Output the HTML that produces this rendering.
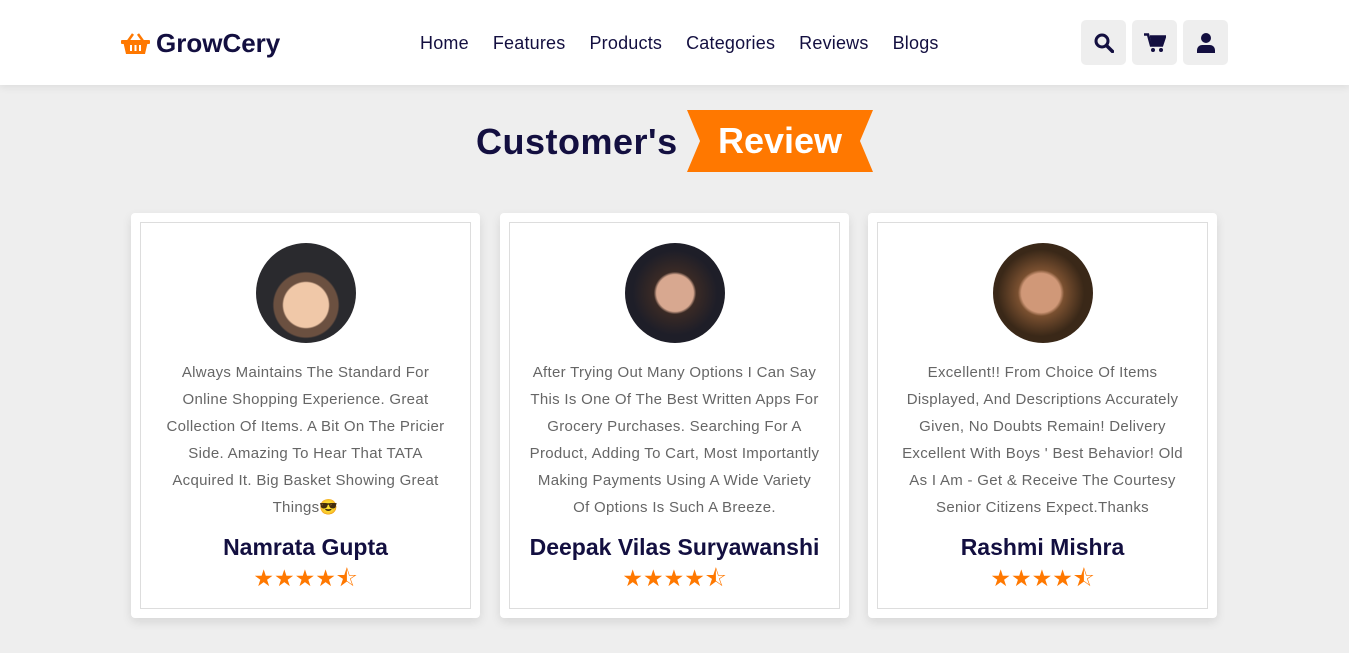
<!DOCTYPE html>
<html><head><meta charset="utf-8"><style>
*{margin:0;padding:0;box-sizing:border-box}
body{width:1349px;height:653px;background:#eeeeee;font-family:"Liberation Sans",sans-serif;overflow:hidden;position:relative}
header{position:absolute;left:0;top:0;width:1349px;height:85px;background:#fff;box-shadow:0 2px 8px rgba(0,0,0,.08)}
.logo{position:absolute;left:121px;top:28px;font-size:26px;font-weight:bold;color:#130f40;display:flex;align-items:center;gap:6px}
nav{position:absolute;left:420px;top:33px;font-size:18px;color:#130f40;letter-spacing:.2px}
nav span{margin-right:24px}
.btns{position:absolute;left:1081px;top:20px;display:flex;gap:6px}
.btns div{width:45px;height:45px;background:#eee;border-radius:5px;display:flex;align-items:center;justify-content:center}
.title{position:absolute;left:476px;top:121px;font-size:36px;font-weight:bold;color:#130f40;letter-spacing:.5px}
.rib{position:absolute;left:687px;top:110px;width:186px;height:62px;background:#ff7800;clip-path:polygon(0 0,100% 0,93% 50%,100% 100%,0 100%,7% 50%);color:#fff;font-size:36px;font-weight:bold;text-align:center;line-height:62px}
.card{position:absolute;top:213px;width:349px;height:405px;background:#fff;box-shadow:0 4px 10px rgba(0,0,0,.1);border-radius:4px}
.in{position:absolute;inset:9px;border:1px solid #ddd;text-align:center}
.av{width:100px;height:100px;border-radius:50%;margin:20px auto 0}
.in p{margin-top:16px;font-size:15px;line-height:27px;color:#666;padding:0 18px;letter-spacing:.3px}
.in h3{position:absolute;top:311px;left:0;right:0;font-size:23px;color:#130f40}
.st{position:absolute;top:339px;left:0;right:0;color:#ff7800;font-size:23px;letter-spacing:0}
</style></head><body>
<header>
<div class="logo"><svg width="29" height="24" viewBox="0 0 29 24"><path d="M2 9h25l-3 13H5z" fill="#ff7800"/><path d="M7 9l5-7M22 9l-5-7" stroke="#ff7800" stroke-width="2.5" fill="none"/><rect x="0" y="8" width="29" height="4" rx="1" fill="#ff7800"/><path d="M10 13v6M14.5 13v6M19 13v6" stroke="#fff" stroke-width="2"/></svg>GrowCery</div>
<nav><span>Home</span><span>Features</span><span>Products</span><span>Categories</span><span>Reviews</span><span>Blogs</span></nav>
<div class="btns">
<div><svg width="20" height="20" viewBox="0 0 20 20"><circle cx="8" cy="8" r="6" stroke="#130f40" stroke-width="3" fill="none"/><path d="M12.5 12.5l6 6" stroke="#130f40" stroke-width="3.5" stroke-linecap="round"/></svg></div>
<div><svg width="22" height="20" viewBox="0 0 22 20"><path d="M0 1.5h4l3 11h11l3-9H6" stroke="#130f40" stroke-width="2.5" fill="none"/><path d="M6 4h15l-3 9H8z" fill="#130f40"/><circle cx="9" cy="17" r="2" fill="#130f40"/><circle cx="17" cy="17" r="2" fill="#130f40"/></svg></div>
<div><svg width="18" height="20" viewBox="0 0 18 20"><circle cx="9" cy="5" r="5" fill="#130f40"/><path d="M0 20v-3a5 5 0 0 1 5-5h8a5 5 0 0 1 5 5v3z" fill="#130f40"/></svg></div>
</div>
</header>
<div class="title">Customer's</div>
<div class="rib">Review</div>

<div class="card" style="left:131px"><div class="in">
<div class="av" style="background:radial-gradient(circle at 50% 62%,#f0c8a8 0 28%,#6b5040 30% 40%,#2a2a2e 42%)"></div>
<p>Always Maintains The Standard For Online Shopping Experience. Great Collection Of Items. A Bit On The Pricier Side. Amazing To Hear That TATA Acquired It. Big Basket Showing Great Things😎</p>
<h3>Namrata Gupta</h3><div class="st">★★★★⯪</div></div></div>

<div class="card" style="left:500px"><div class="in">
<div class="av" style="background:radial-gradient(circle at 50% 50%,#d8a890 0 26%,#3a2a25 30%,#1e1e28 60%)"></div>
<p>After Trying Out Many Options I Can Say This Is One Of The Best Written Apps For Grocery Purchases. Searching For A Product, Adding To Cart, Most Importantly Making Payments Using A Wide Variety Of Options Is Such A Breeze.</p>
<h3>Deepak Vilas Suryawanshi</h3><div class="st">★★★★⯪</div></div></div>

<div class="card" style="left:868px"><div class="in">
<div class="av" style="background:radial-gradient(circle at 48% 50%,#d09878 0 27%,#7a5030 32%,#3a2818 60%)"></div>
<p>Excellent!! From Choice Of Items Displayed, And Descriptions Accurately Given, No Doubts Remain! Delivery Excellent With Boys ' Best Behavior! Old As I Am - Get &amp; Receive The Courtesy Senior Citizens Expect.Thanks</p>
<h3>Rashmi Mishra</h3><div class="st">★★★★⯪</div></div></div>
</body></html>
